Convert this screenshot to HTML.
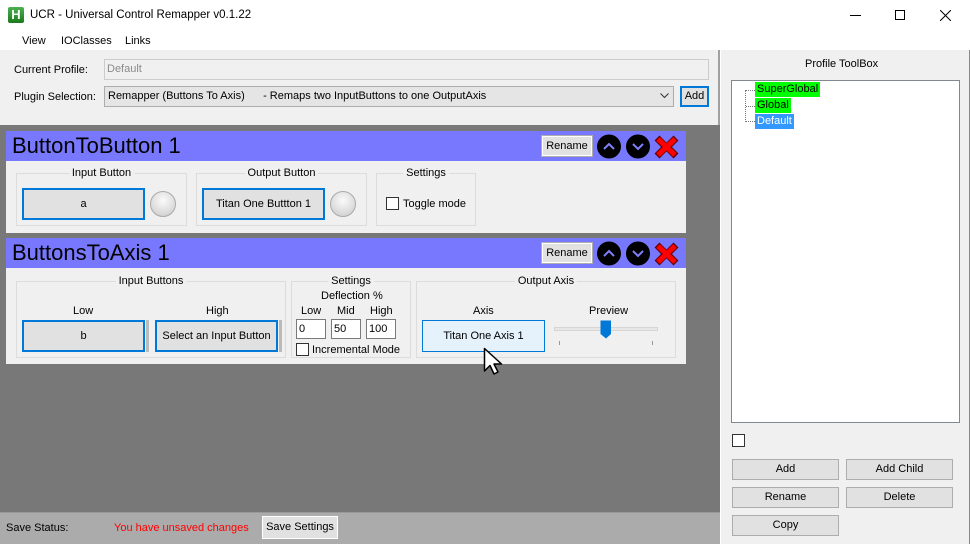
<!DOCTYPE html>
<html><head><meta charset="utf-8">
<style>
*{box-sizing:border-box;margin:0;padding:0}
body{width:970px;height:544px;overflow:hidden;background:#fff;font-family:"Liberation Sans",Arial,sans-serif;font-size:11px;color:#000;position:relative}
.a{position:absolute}
.t{position:absolute;white-space:nowrap;line-height:14px}
.btn{position:absolute;background:#e1e1e1;border:1px solid #adadad;text-align:center;white-space:nowrap}
.bb{position:absolute;background:#e1e1e1;border:2px solid #0078d7;text-align:center;white-space:nowrap}
.grp{position:absolute;border:1px solid #dcdcdc}
.gl{position:absolute;background:#f0f0f0;padding:0 3px;white-space:nowrap;line-height:14px;top:-8px;left:50%;transform:translateX(-50%)}
.hdr{position:absolute;left:0;right:0;top:0;height:30px;background:#7878ff}
.hdr span{position:absolute;left:6px;top:3px;font-size:22px;line-height:24px}
.inp{position:absolute;background:#fff;border:1px solid #7a7a7a;padding-left:2px;line-height:18px}
.cb{position:absolute;width:13px;height:13px;border:1px solid #333;background:#fff}
.led{position:absolute;width:26px;height:26px;border-radius:50%;border:1px solid #aaa;background:radial-gradient(circle at 50% 35%,#fafafa,#ddd 60%,#c8c8c8)}
</style></head><body>
<div class="a" style="left:8px;top:7px;width:16px;height:16px;background:linear-gradient(#4caf50,#1b7a1b);border-radius:2px;color:#fff;font-weight:bold;font-size:13px;line-height:16px;text-align:center">H</div>
<div class="t" style="left:30px;top:8px;font-size:11.5px">UCR - Universal Control Remapper v0.1.22</div>
<div class="a" style="left:850px;top:15px;width:11px;height:1px;background:#000"></div>
<div class="a" style="left:895px;top:10px;width:10px;height:10px;border:1px solid #000"></div>
<svg class="a" style="left:940px;top:10px" width="11" height="11"><path d="M0 0L11 11M11 0L0 11" stroke="#000" stroke-width="1"/></svg>
<div class="t" style="left:22px;top:34px">View</div>
<div class="t" style="left:61px;top:34px">IOClasses</div>
<div class="t" style="left:125px;top:34px">Links</div>
<div class="a" style="left:0;top:50px;width:720px;height:75px;background:#f0f0f0;border-right:2px solid #a0a0a0"></div>
<div class="t" style="left:14px;top:63px">Current Profile:</div>
<div class="a" style="left:104px;top:59px;width:605px;height:21px;border:1px solid #ccc;color:#8a8a8a;padding-left:2px;line-height:19px">Default</div>
<div class="t" style="left:14px;top:90px">Plugin Selection:</div>
<div class="a" style="left:104px;top:86px;width:570px;height:21px;border:1px solid #adadad;background:#e5e5e5;padding-left:3px;line-height:19px;white-space:pre">Remapper (Buttons To Axis)      - Remaps two InputButtons to one OutputAxis</div>
<svg class="a" style="left:660px;top:93px" width="9" height="6"><path d="M0.5 0.5L4.5 4.5L8.5 0.5" stroke="#333" fill="none"/></svg>
<div class="bb" style="left:680px;top:86px;width:29px;height:21px;line-height:17px">Add</div>
<div class="a" style="left:0;top:125px;width:720px;height:387px;background:#787878"></div>
<div class="a" style="left:6px;top:131px;width:680px;height:102px;background:#f0f0f0">
  <div class="hdr"><span>ButtonToButton 1</span></div>
</div>
<div class="a" style="left:6px;top:238px;width:680px;height:126px;background:#f0f0f0">
  <div class="hdr"><span>ButtonsToAxis 1</span></div>
</div>
<div class="btn" style="left:541px;top:135px;width:52px;height:22px;line-height:18px;border:2px solid #fff;outline:1px solid #adadad;outline-offset:-1px">Rename</div>
<div class="btn" style="left:541px;top:242px;width:52px;height:22px;line-height:18px;border:2px solid #fff;outline:1px solid #adadad;outline-offset:-1px">Rename</div>
<svg class="a" style="left:596px;top:134px" width="90" height="26">
<circle cx="13" cy="12.5" r="12" fill="#000"/><path d="M8 15L13 10L18 15" stroke="#8080ff" stroke-width="2" fill="none"/>
<circle cx="42" cy="12.5" r="12" fill="#000"/><path d="M37 10L42 15L47 10" stroke="#8080ff" stroke-width="2" fill="none"/>
<path d="M61 4L70 13L61 22M80 4L71 13L80 22" stroke="#600" stroke-width="7" fill="none"/>
<path d="M62 5L79 21M79 5L62 21" stroke="#f00" stroke-width="5"/>
</svg>
<svg class="a" style="left:596px;top:241px" width="90" height="26">
<circle cx="13" cy="12.5" r="12" fill="#000"/><path d="M8 15L13 10L18 15" stroke="#8080ff" stroke-width="2" fill="none"/>
<circle cx="42" cy="12.5" r="12" fill="#000"/><path d="M37 10L42 15L47 10" stroke="#8080ff" stroke-width="2" fill="none"/>
<path d="M61 4L70 13L61 22M80 4L71 13L80 22" stroke="#600" stroke-width="7" fill="none"/>
<path d="M62 5L79 21M79 5L62 21" stroke="#f00" stroke-width="5"/>
</svg>
<div class="grp" style="left:16px;top:173px;width:171px;height:53px"><div class="gl">Input Button</div></div>
<div class="bb" style="left:22px;top:188px;width:123px;height:32px;line-height:28px">a</div>
<div class="led" style="left:150px;top:191px"></div>
<div class="grp" style="left:196px;top:173px;width:171px;height:53px"><div class="gl">Output Button</div></div>
<div class="bb" style="left:202px;top:188px;width:123px;height:32px;line-height:28px">Titan One Buttton 1</div>
<div class="led" style="left:330px;top:191px"></div>
<div class="grp" style="left:376px;top:173px;width:100px;height:53px"><div class="gl">Settings</div></div>
<div class="cb" style="left:386px;top:197px"></div>
<div class="t" style="left:403px;top:197px">Toggle mode</div>
<div class="grp" style="left:16px;top:281px;width:270px;height:77px"><div class="gl">Input Buttons</div></div>
<div class="t" style="left:73px;top:304px">Low</div>
<div class="t" style="left:206px;top:304px">High</div>
<div class="bb" style="left:22px;top:320px;width:123px;height:32px;line-height:28px">b</div>
<div class="a" style="left:146px;top:320px;width:3px;height:32px;background:#bbb"></div>
<div class="bb" style="left:155px;top:320px;width:123px;height:32px;line-height:28px">Select an Input Button</div>
<div class="a" style="left:279px;top:320px;width:3px;height:32px;background:#bbb"></div>
<div class="grp" style="left:291px;top:281px;width:120px;height:77px"><div class="gl">Settings</div></div>
<div class="t" style="left:321px;top:289px">Deflection %</div>
<div class="t" style="left:301px;top:304px">Low</div>
<div class="t" style="left:337px;top:304px">Mid</div>
<div class="t" style="left:370px;top:304px">High</div>
<div class="inp" style="left:296px;top:319px;width:30px;height:20px">0</div>
<div class="inp" style="left:331px;top:319px;width:30px;height:20px">50</div>
<div class="inp" style="left:366px;top:319px;width:30px;height:20px">100</div>
<div class="cb" style="left:296px;top:343px"></div>
<div class="t" style="left:312px;top:343px">Incremental Mode</div>
<div class="grp" style="left:416px;top:281px;width:260px;height:77px"><div class="gl">Output Axis</div></div>
<div class="t" style="left:473px;top:304px">Axis</div>
<div class="t" style="left:589px;top:304px">Preview</div>
<div class="a" style="left:422px;top:320px;width:123px;height:32px;background:#e5f1fb;border:1px solid #0078d7;text-align:center;line-height:30px">Titan One Axis 1</div>
<div class="a" style="left:554px;top:327px;width:104px;height:4px;background:#e7e7e7;border:1px solid #d6d6d6"></div>
<svg class="a" style="left:600px;top:320px" width="12" height="19"><path d="M0.5 0.5H11V14L6 18.5L0.5 14Z" fill="#0078d7"/></svg>
<div class="a" style="left:559px;top:341px;width:1px;height:4px;background:#999"></div>
<div class="a" style="left:652px;top:341px;width:1px;height:4px;background:#999"></div>
<svg class="a" style="left:483px;top:347px" width="20" height="30"><path d="M1.5 1.5V24L7 18.5L11 27L15 25L11 17H18.5Z" fill="#fff" stroke="#000" stroke-width="1.5" stroke-linejoin="round"/></svg>
<div class="a" style="left:0;top:512px;width:720px;height:32px;background:#ababab;border-top:1px solid #999"></div>
<div class="t" style="left:6px;top:521px">Save Status:</div>
<div class="t" style="left:114px;top:521px;color:#f00">You have unsaved changes</div>
<div class="btn" style="left:261px;top:515px;width:78px;height:25px;line-height:21px;border:2px solid #fff;outline:1px solid #adadad;outline-offset:-1px">Save Settings</div>
<div class="a" style="left:721px;top:50px;width:249px;height:494px;background:#f0f0f0;border-right:1px solid #888"></div>
<div class="t" style="left:805px;top:57px">Profile ToolBox</div>
<div class="a" style="left:731px;top:80px;width:229px;height:343px;background:#fff;border:1px solid #828790"></div>
<div class="a" style="left:745px;top:90px;width:1px;height:32px;border-left:1px dotted #777"></div>
<div class="a" style="left:746px;top:90px;width:9px;border-top:1px dotted #777"></div>
<div class="a" style="left:746px;top:106px;width:9px;border-top:1px dotted #777"></div>
<div class="a" style="left:746px;top:121px;width:9px;border-top:1px dotted #777"></div>
<div class="t" style="left:755px;top:82px;background:#0f0;padding:0 2px;line-height:15px">SuperGlobal</div>
<div class="t" style="left:755px;top:98px;background:#0f0;padding:0 2px;line-height:15px">Global</div>
<div class="t" style="left:755px;top:114px;background:#3399ff;color:#fff;padding:0 2px;line-height:15px">Default</div>
<div class="cb" style="left:732px;top:434px"></div>
<div class="btn" style="left:732px;top:459px;width:107px;height:21px;line-height:19px">Add</div>
<div class="btn" style="left:846px;top:459px;width:107px;height:21px;line-height:19px">Add Child</div>
<div class="btn" style="left:732px;top:487px;width:107px;height:21px;line-height:19px">Rename</div>
<div class="btn" style="left:846px;top:487px;width:107px;height:21px;line-height:19px">Delete</div>
<div class="btn" style="left:732px;top:515px;width:107px;height:21px;line-height:19px">Copy</div>
</body></html>
